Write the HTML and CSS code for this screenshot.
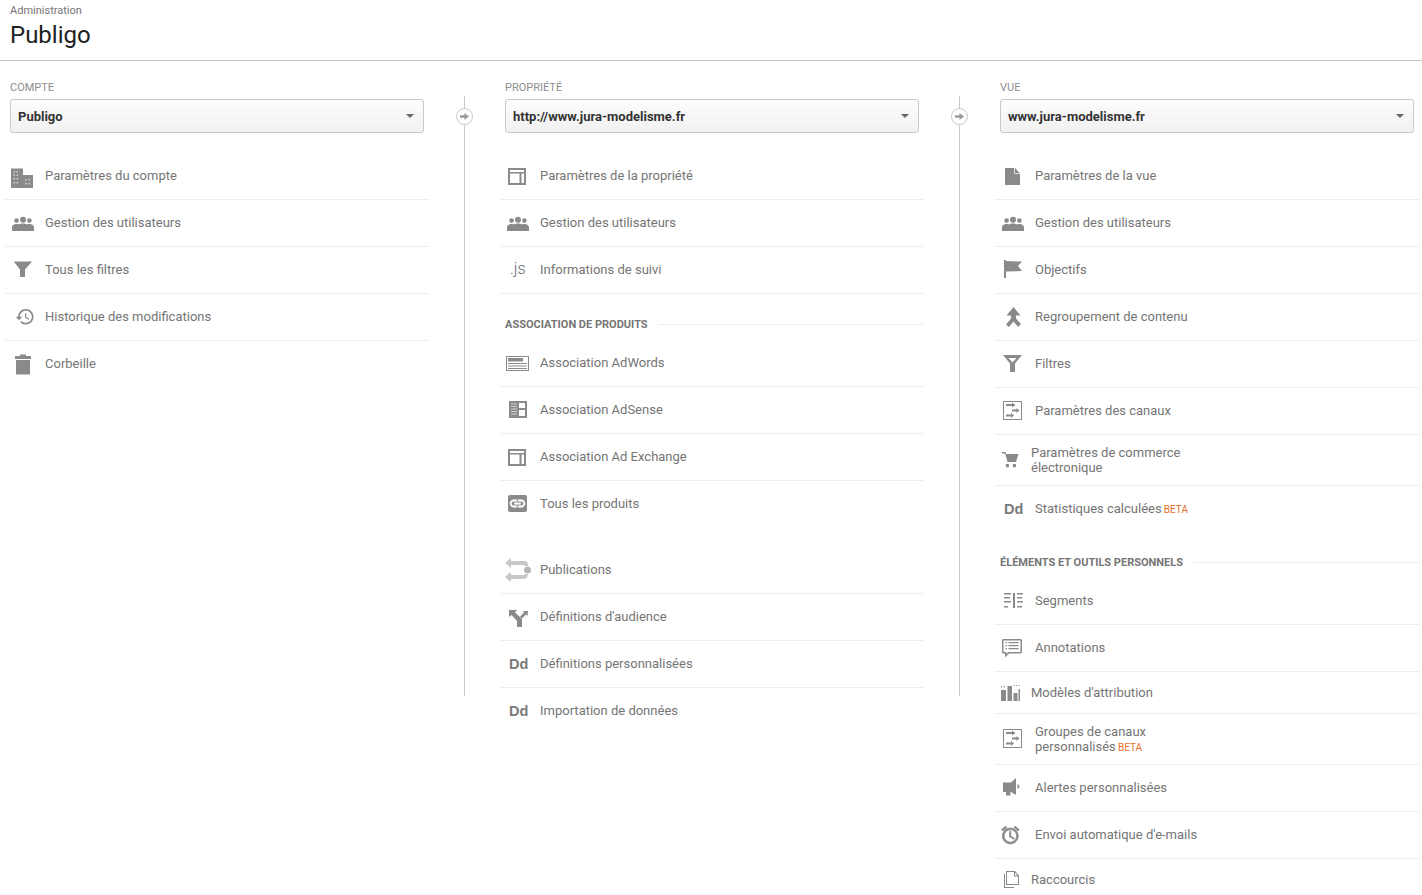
FILE: index.html
```html
<!DOCTYPE html>
<html lang="fr">
<head>
<meta charset="utf-8">
<title>Administration - Publigo</title>
<link rel="stylesheet" href="styles.css">
</head>
<body>
<svg class="sprite" aria-hidden="true">
  <symbol id="i-group" viewBox="0 0 28 28">
    <circle cx="15" cy="10.8" r="3"/><circle cx="8.6" cy="11.6" r="2.3"/><circle cx="21.4" cy="11.6" r="2.3"/>
    <path d="M4 22v-3.500C4 16 6.500 15 8.500 15c.9 0 1.700.2 2.300.4 1.100-.7 2.600-1 4.200-1 1.500 0 3 .3 4 1 .7-.2 1.500-.4 2.300-.4 2.200 0 4.700 1 4.700 3.500V22z"/>
  </symbol>
  <symbol id="i-frame" viewBox="0 0 28 28">
    <path d="M5 6h18v17H5zm2 5.500V21h9.500v-9.500zm11.500 0V21H21v-9.500zM7 8v2h14V8z" fill-rule="evenodd"/>
  </symbol>
  <symbol id="i-channels" viewBox="0 0 28 28">
    <path d="M5 4h19v19H5zm1 1v17h17V5z" fill-rule="evenodd"/>
    <path d="M8 7h6V5.500L17.500 8 14 10.500V9H8zM14 12.500h4.500V11l3 2.500-3 2.500v-1.500H14zM8 17.500h5V16l3 2.500-3 2.500v-1.500H8z"/>
  </symbol>
</svg>

<header class="top">
  <div class="crumb">Administration</div>
  <h1 class="title">Publigo</h1>
</header>

<main class="columns">
  <section class="col">
    <div class="col-main">
      <div class="col-label">COMPTE</div>
      <div class="picker"><span class="picker-text">Publigo</span><span class="caret"></span></div>
      <ul class="list">
        <li class="row"><span class="slot"><svg class="i" viewBox="0 0 28 28"><path d="M3 6.500h12V13h10v13H3z"/><path class="dot" d="M5.500 9v1.500H7V9zm3 0v1.500H10V9zM5.500 12.500V14H7v-1.500zm3 0V14H10v-1.500zM5.500 16v1.500H7V16zm3 0v1.500H10V16zM5.500 20v1.500H7V20zm3 0v1.500H10V20zM17 17v1.500h1.500V17zm3.500 0v1.500H22V17zM17 21v1.500h1.500V21zm3.500 0v1.500H22V21z"/></svg></span>Paramètres du compte</li>
        <li class="row"><span class="slot"><svg class="i"><use href="#i-group"/></svg></span>Gestion des utilisateurs</li>
        <li class="row"><span class="slot"><svg class="i" viewBox="0 0 28 28"><path d="M5.700 5.500H24l-7 8V21h-5v-7.500z"/></svg></span>Tous les filtres</li>
        <li class="row"><span class="slot"><svg class="i" viewBox="0 0 28 28"><path transform="translate(6.700 3.400) scale(.857)" d="M13 3c-4.970 0-9 4.030-9 9H1l3.890 3.890.07.14L9 12H6c0-3.870 3.130-7 7-7s7 3.130 7 7-3.130 7-7 7c-1.930 0-3.680-.79-4.940-2.060l-1.420 1.420C8.270 19.990 10.510 21 13 21c4.970 0 9-4.030 9-9s-4.030-9-9-9zm-1 5v5l4.280 2.540.72-1.210-3.500-2.080V8H12z"/></svg></span>Historique des modifications</li>
        <li class="row row-last"><span class="slot"><svg class="i" viewBox="0 0 28 28"><path d="M12 4.500h6V6h5v3H7V6h5zM8 10h14v14.500H8z"/></svg></span>Corbeille</li>
      </ul>
    </div>
    <div class="link-line"><span class="link-badge"><svg viewBox="0 0 10 10" class="link-arrow"><path d="M0 3.500h5V1l5 4-5 4V6.500H0z"/></svg></span></div>
  </section>

  <section class="col">
    <div class="col-main">
      <div class="col-label">PROPRIÉTÉ</div>
      <div class="picker"><span class="picker-text">http://www.jura-modelisme.fr</span><span class="caret"></span></div>
      <ul class="list">
        <li class="row"><span class="slot"><svg class="i"><use href="#i-frame"/></svg></span>Paramètres de la propriété</li>
        <li class="row"><span class="slot"><svg class="i"><use href="#i-group"/></svg></span>Gestion des utilisateurs</li>
        <li class="row"><span class="slot"><span class="js">.js</span></span>Informations de suivi</li>
      </ul>
      <h2 class="group-head">ASSOCIATION DE PRODUITS</h2>
      <ul class="list">
        <li class="row"><span class="slot"><svg class="i" viewBox="0 0 28 28"><path fill-rule="evenodd" d="M3 7h23v15H3zm1 1v13h21V8z"/><path d="M5 9h15v3.500H5zM5 14h19v1H5zM5 16.500h19v1H5zM5 19h19v1H5z"/></svg></span>Association AdWords</li>
        <li class="row"><span class="slot"><svg class="i" viewBox="0 0 28 28"><path d="M6 5h18v17H6z"/><path fill="#fff" d="M16 7h6v5h-6zM16 14h6v6h-6z"/><path class="dot" d="M8 7.500h6v1H8zM8 10h6v1H8zM8 12.500h6v1H8zM8 15h6v1H8zM8 17.500h6v1H8z"/></svg></span>Association AdSense</li>
        <li class="row"><span class="slot"><svg class="i"><use href="#i-frame"/></svg></span>Association Ad Exchange</li>
        <li class="row row-last"><span class="slot"><svg class="i" viewBox="0 0 28 28"><rect x="5" y="5" width="19" height="17" rx="2"/><path fill="#fff" stroke="#fff" stroke-width=".8" transform="translate(5.500 4.500) scale(.75)" d="M3.900 12c0-1.710 1.390-3.100 3.100-3.100h4V7H7c-2.760 0-5 2.240-5 5s2.240 5 5 5h4v-1.900H7c-1.710 0-3.100-1.390-3.100-3.100zM8 13h8v-2H8v2zm9-6h-4v1.900h4c1.710 0 3.100 1.390 3.100 3.100s-1.390 3.100-3.100 3.100h-4V17h4c2.760 0 5-2.240 5-5s-2.240-5-5-5z"/></svg></span>Tous les produits</li>
      </ul>
      <ul class="list list-spaced">
        <li class="row"><span class="slot"><svg class="i i-pale" viewBox="0 0 28 28"><path d="M2 7l6-5v3h14c2 0 3 2 3 5h-3.500c0-.6-.5-1-1-1H8v3zM2 21l6-5v3h12c.6 0 1.500-.5 1.500-1H25c0 3-2 5-4 5H8v3z"/><circle cx="24.500" cy="14" r="3.500" fill="#b5b5b5"/></svg></span>Publications</li>
        <li class="row"><span class="slot"><svg class="i" viewBox="0 0 28 28"><path d="M6 7h8l-2 2.500 7 6.500v8h-5v-6l-5.500-6L6 14zM25 8l-.5 5-1.500-1.500-4 4-2-2 4-4-1-1.500z"/></svg></span>Définitions d'audience</li>
        <li class="row"><span class="slot"><span class="dd">Dd</span></span>Définitions personnalisées</li>
        <li class="row row-last"><span class="slot"><span class="dd">Dd</span></span>Importation de données</li>
      </ul>
    </div>
    <div class="link-line"><span class="link-badge"><svg viewBox="0 0 10 10" class="link-arrow"><path d="M0 3.500h5V1l5 4-5 4V6.500H0z"/></svg></span></div>
  </section>

  <section class="col col-end">
    <div class="col-main">
      <div class="col-label">VUE</div>
      <div class="picker"><span class="picker-text">www.jura-modelisme.fr</span><span class="caret"></span></div>
      <ul class="list">
        <li class="row"><span class="slot"><svg class="i" viewBox="0 0 28 28"><path d="M7 6h10l5 5.500V23H7z"/><path d="M16.500 6v5.500H22" fill="none" stroke="#fff" stroke-width=".7"/></svg></span>Paramètres de la vue</li>
        <li class="row"><span class="slot"><svg class="i"><use href="#i-group"/></svg></span>Gestion des utilisateurs</li>
        <li class="row"><span class="slot"><svg class="i" viewBox="0 0 28 28"><path d="M6 4h2v1l16 .5-4 4.500 4 5-16 .5V22H6z"/></svg></span>Objectifs</li>
        <li class="row"><span class="slot"><svg class="i" viewBox="0 0 28 28"><path d="M15.500 4l7 8.500h-4.500v3l5 5.500-3 3-4.500-5.500-4.500 5.500L8 21.500l5-6v-3H8.500z"/></svg></span>Regroupement de contenu</li>
        <li class="row"><span class="slot"><svg class="i" viewBox="0 0 28 28"><path fill-rule="evenodd" d="M5 5h19l-7 8.500V22h-5v-8.500zm5.500 3l4 4.500 4-4.500z"/></svg></span>Filtres</li>
        <li class="row"><span class="slot"><svg class="i"><use href="#i-channels"/></svg></span>Paramètres des canaux</li>
        <li class="row row-tall row-narrow"><span class="slot"><svg class="i" viewBox="0 0 28 28"><path d="M4 6h3.500l.5 2h12.500L18 16H9.500L7.500 8.500 6.500 7.500H4z"/><rect x="7.800" y="18" width="3.200" height="3.200" rx=".6"/><rect x="14.800" y="18" width="3.200" height="3.200" rx=".6"/></svg></span><span>Paramètres de commerce<br>électronique</span></li>
        <li class="row row-plain"><span class="slot"><span class="dd">Dd</span></span><span>Statistiques calculées <span class="beta beta-tight">BETA</span></span></li>
      </ul>
      <h2 class="group-head">ÉLÉMENTS ET OUTILS PERSONNELS</h2>
      <ul class="list">
        <li class="row"><span class="slot"><svg class="i" viewBox="0 0 28 28"><path d="M6 6h7v1.500H6zM6 10h6v1.500H6zM6 14h7v1.500H6zM6 19h4v1.500H6zM15 6h2v15h-2zM19 6h6v1.500h-6zM19 10h5v1.500h-5zM19 14h6v1.500h-6zM19 19h5v1.500h-5z"/></svg></span>Segments</li>
        <li class="row"><span class="slot"><svg class="i" viewBox="0 0 28 28"><path fill-rule="evenodd" d="M5 5h17.500c.8 0 1.500.7 1.500 1.500V18c0 .8-.7 1.500-1.500 1.500H11L7 23.500v-4H5c-.6 0-1-.7-1-1.500V6.500C4 5.700 4.400 5 5 5zm.5 1.500v11.500h3v2l2-2h12V6.500z"/><path d="M7.500 8h1.500v1.300H7.500zM10.500 8h10v1.300h-10zM7.500 11h1.500v1.300H7.500zM10.500 11h10v1.300h-10zM7.500 14h1.500v1.300H7.500zM10.500 14h10v1.300h-10z"/></svg></span>Annotations</li>
        <li class="row row-compact row-narrow"><span class="slot"><svg class="i" viewBox="0 0 28 28"><path d="M3 11h5v11H3zM9.500 7h4.500v15H9.500zM15.500 14h4v8h-4zM20.500 10h1.500v12h-1.500z"/><path d="M3 7h1v1.500H3zM5.500 7h1v1.500h-1zM15.500 6h1v1h-1zM18 6h1v1h-1zM20.500 6h1v1h-1z"/></svg></span>Modèles d'attribution</li>
        <li class="row row-tall"><span class="slot"><svg class="i"><use href="#i-channels"/></svg></span><span>Groupes de canaux<br>personnalisés <span class="beta beta-tight">BETA</span></span></li>
        <li class="row"><span class="slot"><svg class="i" viewBox="0 0 28 28"><path d="M5 8.500h8L18 4v17l-5-3h-.5v3.500H8V18H5zM19.500 10c1.200.4 2 1.300 2 2.500s-.8 2.100-2 2.500z"/></svg></span>Alertes personnalisées</li>
        <li class="row"><span class="slot"><svg class="i" viewBox="0 0 28 28"><path transform="translate(1.800 3.500) scale(.88)" stroke="#8a8a8a" stroke-width=".9" d="M22 5.720l-4.600-3.860-1.290 1.530 4.600 3.860L22 5.720zM7.880 3.390L6.600 1.860 2 5.710l1.290 1.530 4.590-3.850zM12.500 8H11v6l4.750 2.850.75-1.230-4-2.370V8zM12 4c-4.970 0-9 4.030-9 9s4.030 9 9 9c4.970 0 9-4.030 9-9s-4.030-9-9-9zm0 16c-3.870 0-7-3.130-7-7s3.130-7 7-7 7 3.130 7 7-3.130 7-7 7z"/></svg></span>Envoi automatique d'e-mails</li>
        <li class="row row-compact row-narrow row-last"><span class="slot"><svg class="i" viewBox="0 0 28 28"><path fill-rule="evenodd" d="M8 5h9l4 4.500V19H8zm1 1v12h11V10.500h-4V6zm8 .8V9.500h2.500zM6 8h1v13h9v1H6z"/></svg></span>Raccourcis</li>
      </ul>
    </div>
  </section>
</main>
</body>
</html>
```

FILE: styles.css
```css
html, body {
  margin: 0;
  padding: 0;
  height: 895px;
  overflow: hidden;
  background: #fff;
}

body {
  font-family: Roboto, "Liberation Sans", sans-serif;
  font-size: 13px;
  line-height: 15px;
  color: #757575;
}

.sprite {
  display: none;
}

.top {
  height: 60px;
  padding-left: 10px;
  border-bottom: 1px solid #c6c6c6;
}

.crumb {
  padding-top: 4px;
  font-size: 11px;
  line-height: 13px;
  color: #757575;
}

.title {
  margin: 0;
  padding-top: 3px;
  font-size: 24px;
  line-height: 30px;
  font-weight: 400;
  color: #212121;
}

.columns {
  display: flex;
}

.col {
  display: flex;
  flex: 0 0 495px;
}

.col-end {
  flex: 1 1 auto;
}

.col-main {
  flex: 0 0 424px;
  margin-left: 5px;
  padding-top: 20px;
}

.col-end .col-main {
  flex-basis: 425px;
}

.col-label {
  padding-left: 5px;
  font-size: 11px;
  line-height: 13px;
  color: #8d8d8d;
}

.picker {
  display: flex;
  align-items: center;
  justify-content: space-between;
  box-sizing: border-box;
  width: 414px;
  height: 34px;
  margin: 5px 0 20px 5px;
  padding: 0 9px 0 7px;
  border: 1px solid #c9c9c9;
  border-radius: 3px;
  background: linear-gradient(#fdfdfd, #f1f1f1);
}

.picker-text {
  font-weight: 700;
  color: #333;
}

.caret {
  width: 0;
  height: 0;
  border-left: 4px solid transparent;
  border-right: 4px solid transparent;
  border-top: 4px solid #666;
}

.list {
  margin: 0;
  padding: 0;
  list-style: none;
}

.list-spaced {
  margin-top: 19px;
}

.row {
  display: flex;
  align-items: center;
  box-sizing: border-box;
  height: 47px;
  padding-bottom: 2px;
  border-bottom: 1px solid #eee;
}

.row-last {
  border-bottom-color: transparent;
}

.row-tall,
.row-compact,
.row-plain {
  padding-bottom: 0;
}

.row-tall {
  height: 51px;
}

.row-compact {
  height: 42px;
}

.row-plain {
  height: 46px;
  border-bottom: 0;
}

.slot {
  display: flex;
  align-items: center;
  flex: 0 0 40px;
  padding-left: 3px;
  box-sizing: border-box;
}

.row-narrow .slot {
  flex-basis: 36px;
}

.i {
  display: block;
  width: 28px;
  height: 28px;
  margin-top: 2px;
  fill: #8a8a8a;
}

.row-tall .i,
.row-compact .i {
  margin-top: 0;
}

.i-pale {
  fill: #c8c8c8;
}

.dot {
  fill: #cfcfcf;
}

.js {
  padding-left: 7px;
  font-size: 16px;
  font-weight: 300;
  line-height: 20px;
  color: #666;
}

.dd {
  padding-left: 6px;
  margin-top: 2px;
  font-family: "Liberation Sans", Arial, sans-serif;
  font-size: 14.5px;
  font-weight: 700;
  line-height: 20px;
  color: #7a7a7a;
}

.row-plain .dd {
  margin-top: 0;
}

.beta {
  font-size: 10px;
  color: #e8702a;
}

.beta-tight {
  margin-left: -1px;
}

.group-head {
  display: flex;
  align-items: center;
  gap: 10px;
  height: 14px;
  margin: 24px 0 8px;
  padding-left: 5px;
  font-size: 11px;
  font-weight: 700;
  line-height: 14px;
  color: #757575;
  white-space: nowrap;
}

.group-head::after {
  content: "";
  flex: 1;
  height: 1px;
  margin-top: -2px;
  background: #eee;
}

.link-line {
  position: relative;
  flex: 0 0 1px;
  height: 600px;
  margin: 35px 0 0 35px;
  background: #c9c9c9;
}

.link-badge {
  position: absolute;
  left: -8px;
  top: 12px;
  display: flex;
  align-items: center;
  justify-content: center;
  box-sizing: border-box;
  width: 17px;
  height: 17px;
  border: 1px solid #c9c9c9;
  border-radius: 50%;
  background: #fff;
}

.link-arrow {
  width: 9px;
  height: 9px;
  fill: #9a9a9a;
}
```
